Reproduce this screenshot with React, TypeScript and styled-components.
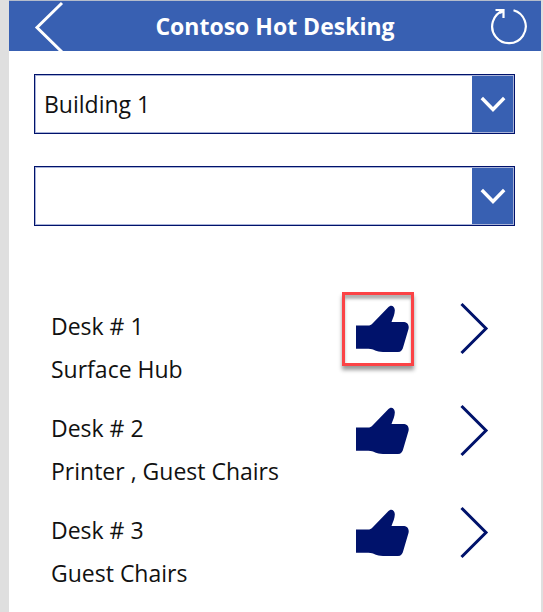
import React from "react";
import styled, { createGlobalStyle, css } from "styled-components";

const blue = "#3860b2";
const navy = "#00126b";

const GlobalStyle = createGlobalStyle`
  *, *::before, *::after { box-sizing: border-box; }
  body {
    margin: 0;
    background: #dfdfdf;
    color: #111;
    font-family: "Open Sans", "Noto Sans", sans-serif;
  }
`;

const Screen = styled.main`
  min-height: 100vh;
  margin: 0 2px 0 9px;
  padding-bottom: 16px;
  border-top: 1px solid #b4bccb;
  background: #fff;
`;

const Header = styled.header`
  display: grid;
  grid-template-columns: 64px 1fr 64px;
  align-items: center;
  height: 50px;
  background: ${blue};
  color: #fff;
`;

const Title = styled.h1`
  margin: 0;
  font-size: 23px;
  line-height: 32px;
  font-weight: 700;
  text-align: center;
`;

const IconButton = styled.button`
  display: flex;
  align-items: center;
  justify-content: center;
  height: 50px;
  padding: 0;
  border: 0;
  background: none;
  color: inherit;
  cursor: pointer;
`;

const BackButton = styled(IconButton)`
  justify-content: flex-end;
  padding-right: 9px;
`;

const Filters = styled.section`
  display: grid;
  gap: 32px;
  padding: 23px 26px 0 25px;
`;

const Dropdown = styled.div`
  display: grid;
  grid-template-columns: 1fr 42px;
  height: 60px;
  border: 1px solid ${navy};
  outline: 1px solid #a9b3d8;
  outline-offset: -2px;
`;

const Select = styled.select`
  grid-area: 1 / 1 / 2 / 3;
  width: 100%;
  padding: 0 50px 0 9px;
  border: 0;
  border-radius: 0;
  appearance: none;
  background: #fff;
  color: #111;
  font: inherit;
  font-size: 23px;
  line-height: 32px;
`;

const DropdownArrow = styled.span`
  grid-area: 1 / 2 / 2 / 3;
  display: flex;
  align-items: center;
  justify-content: center;
  background: ${blue};
  pointer-events: none;
`;

const DeskList = styled.ul`
  margin: 0;
  padding: 66px 43px 0 42px;
  list-style: none;
`;

const DeskRow = styled.li`
  display: grid;
  grid-template-columns: 1fr 72px 48px;
  column-gap: 36px;
  align-items: start;
  height: 102px;
`;

const DeskText = styled.div`
  padding-top: 18px;
  font-size: 23px;
`;

const DeskLine = styled.p`
  margin: 0 0 11px;
  line-height: 32px;
  white-space: nowrap;
`;

const LikeButton = styled(IconButton)<{ $highlighted?: boolean }>`
  height: 74px;
  color: ${navy};
  border: 3px solid transparent;
  padding-left: 10px;
  ${({ $highlighted }) =>
    $highlighted &&
    css`
      border-color: #fb4346;
      box-shadow: 0 4px 4px rgba(0, 0, 0, 0.4), inset 0 4px 3px rgba(0, 0, 0, 0.3);
    `}
`;

const OpenButton = styled(IconButton)`
  height: 74px;
  color: ${navy};
`;

const BackIcon = () => (
  <svg width="30" height="50" viewBox="0 0 30 50" fill="none" stroke="currentColor" strokeWidth="3" aria-hidden="true">
    <path d="M28 2 3 26.500 28 51" />
  </svg>
);

const RefreshIcon = () => (
  <svg width="38" height="38" viewBox="0 0 38 38" fill="none" stroke="currentColor" strokeWidth="2.200" aria-hidden="true">
    <path d="M23.500 3.200A16.800 16.800 0 1 1 13.500 3.500" />
    <path d="M5.500 3h8v8M14 3 10 6" />
  </svg>
);

const DownIcon = () => (
  <svg width="26" height="16" viewBox="0 0 26 16" fill="none" stroke="#fff" strokeWidth="3.400" aria-hidden="true">
    <path d="m1.800 2 11.200 11.500L24.200 2" />
  </svg>
);

const ThumbIcon = () => (
  <svg width="54" height="48" viewBox="0 0 54 48" fill="currentColor" aria-hidden="true">
    <path d="M0 20.500H12C14 20.500 15 20 16.500 18.500L32 2.500C35 -.8 38.500 1 38.800 5 39 9 37 13 35.500 17H47C51 17 53.500 19.500 52.500 24L47.500 41C46.500 45 45 47 42 47H27C20 47 18 44 12.500 43.800H0Z" />
  </svg>
);

const NextIcon = () => (
  <svg width="30" height="54" viewBox="0 0 30 54" fill="none" stroke="currentColor" strokeWidth="3" aria-hidden="true">
    <path d="M2.500 2 27 26.500 2.500 51" />
  </svg>
);

const desks = [
  { name: "Desk # 1", features: "Surface Hub", highlighted: true },
  { name: "Desk # 2", features: "Printer , Guest Chairs", highlighted: false },
  { name: "Desk # 3", features: "Guest Chairs", highlighted: false },
];

export default function App() {
  return (
    <>
      <GlobalStyle />
      <Screen>
        <Header>
          <BackButton type="button" aria-label="Back">
            <BackIcon />
          </BackButton>
          <Title>Contoso Hot Desking</Title>
          <IconButton type="button" aria-label="Refresh">
            <RefreshIcon />
          </IconButton>
        </Header>
        <Filters>
          <Dropdown>
            <Select aria-label="Building" defaultValue="Building 1">
              <option>Building 1</option>
            </Select>
            <DropdownArrow>
              <DownIcon />
            </DropdownArrow>
          </Dropdown>
          <Dropdown>
            <Select aria-label="Floor" defaultValue="">
              <option value="" />
            </Select>
            <DropdownArrow>
              <DownIcon />
            </DropdownArrow>
          </Dropdown>
        </Filters>
        <DeskList>
          {desks.map((desk) => (
            <DeskRow key={desk.name}>
              <DeskText>
                <DeskLine>{desk.name}</DeskLine>
                <DeskLine>{desk.features}</DeskLine>
              </DeskText>
              <LikeButton type="button" aria-label={`Reserve ${desk.name}`} $highlighted={desk.highlighted}>
                <ThumbIcon />
              </LikeButton>
              <OpenButton type="button" aria-label={`Open ${desk.name}`}>
                <NextIcon />
              </OpenButton>
            </DeskRow>
          ))}
        </DeskList>
      </Screen>
    </>
  );
}
